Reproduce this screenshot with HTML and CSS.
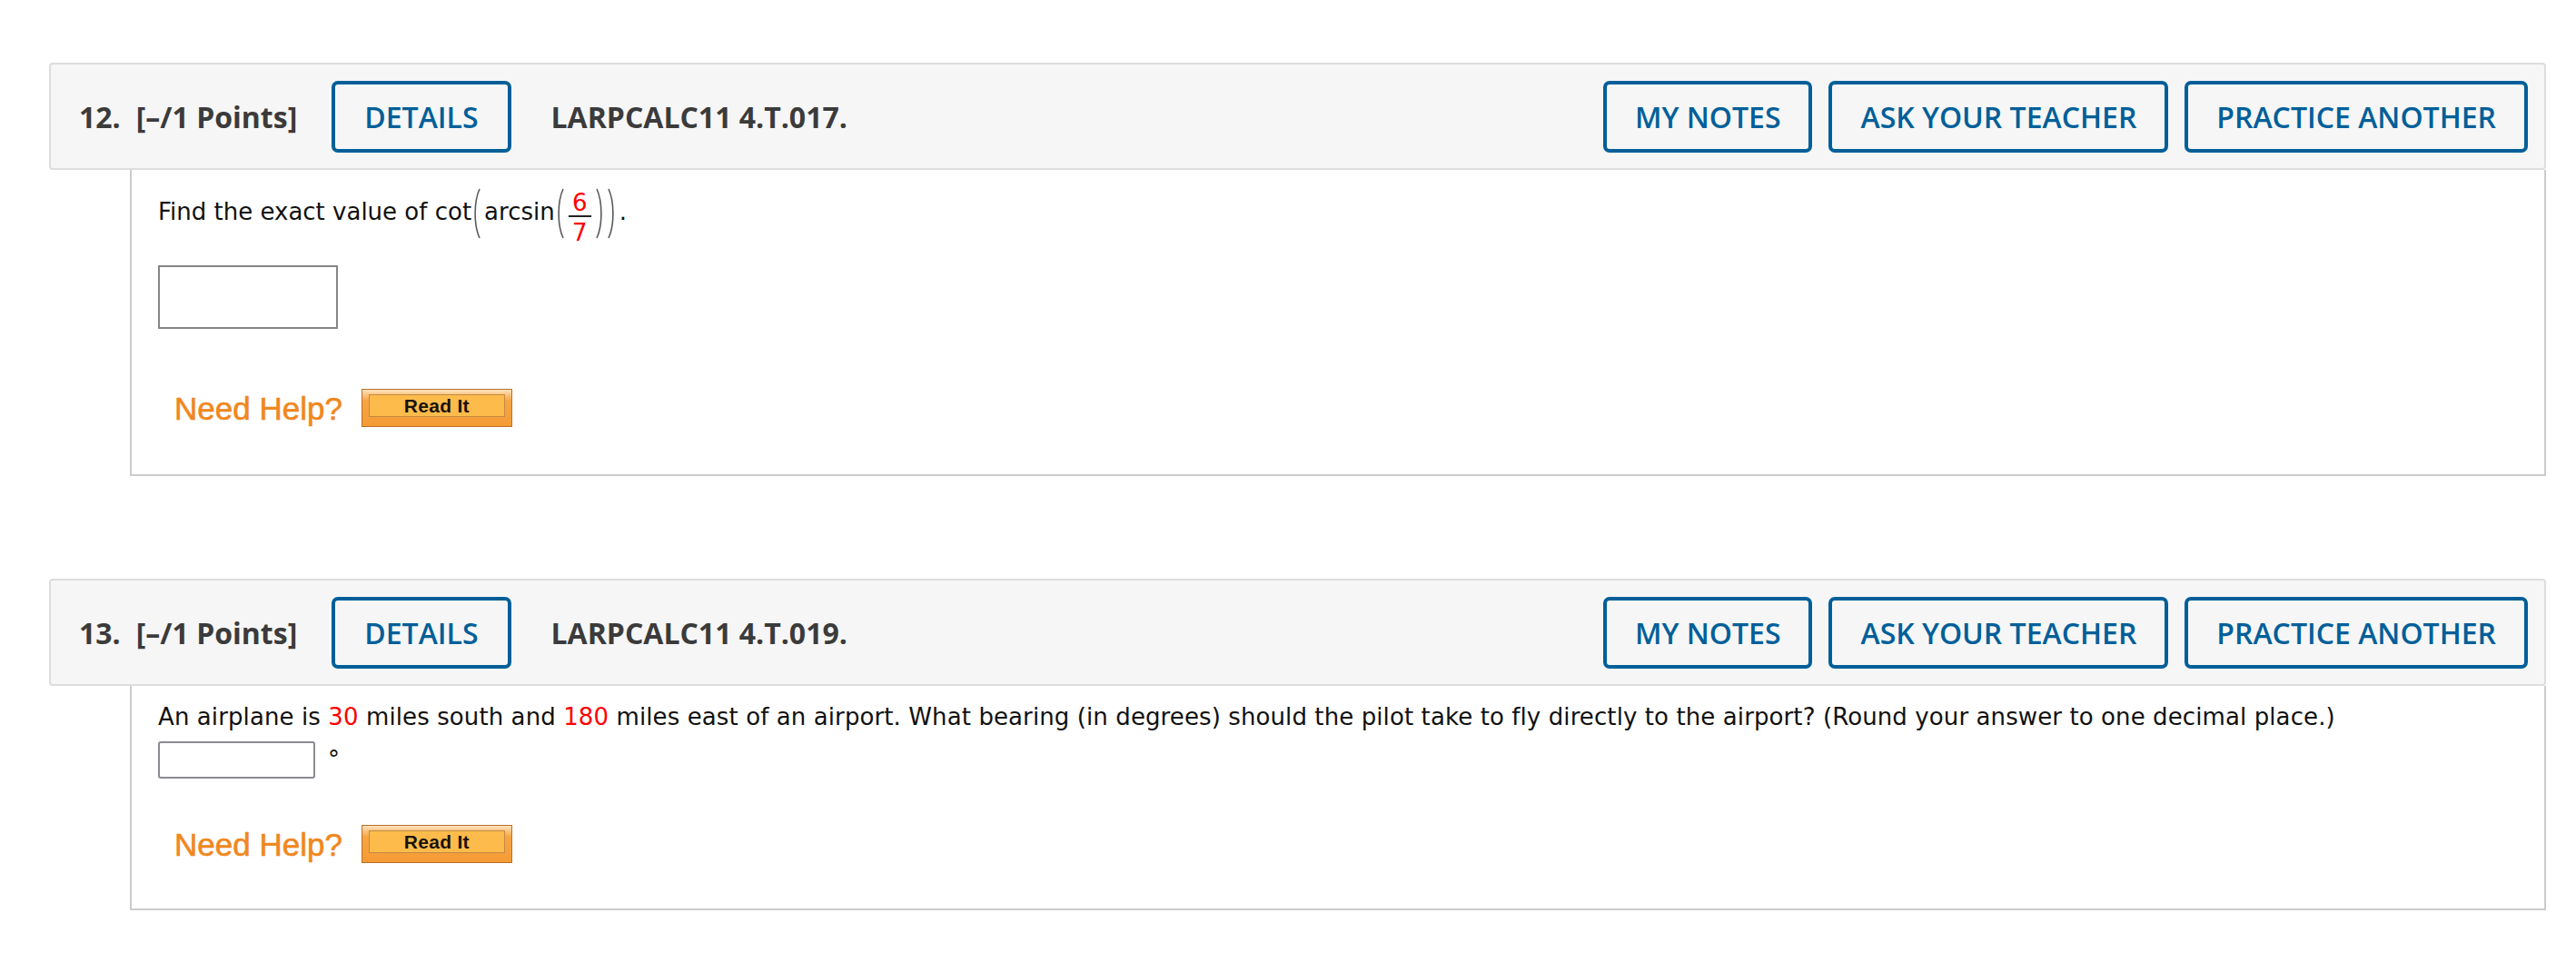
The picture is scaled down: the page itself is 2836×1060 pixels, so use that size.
FILE: index.html
```html
<!DOCTYPE html>
<html lang="en">
<head>
<meta charset="utf-8">
<title>Questions</title>
<link rel="stylesheet" href="styles.css">
</head>
<body>
<div class="page">

  <section class="question q12">
    <div class="q-header">
      <span class="q-num">12.</span>
      <span class="q-points">[–/1 Points]</span>
      <a class="q-btn details">DETAILS</a>
      <span class="q-code">LARPCALC11 4.T.017.</span>
      <div class="q-actions">
        <a class="q-btn">MY NOTES</a>
        <a class="q-btn">ASK YOUR TEACHER</a>
        <a class="q-btn">PRACTICE ANOTHER</a>
      </div>
    </div>
    <div class="q-body">
      <p class="prompt math-prompt">Find the exact value of cot<svg class="paren open" viewBox="0 0 10 56" width="10" height="56"><path d="M8 1 C1.5 15 1.5 41 8 55"/></svg>arcsin<svg class="paren open inner" viewBox="0 0 10 56" width="10" height="56"><path d="M8 1 C1.5 15 1.5 41 8 55"/></svg><span class="frac"><span class="num">6</span><span class="bar"></span><span class="den">7</span></span><svg class="paren close inner" viewBox="0 0 10 56" width="10" height="56"><path d="M2 1 C8.5 15 8.5 41 2 55"/></svg><svg class="paren close" viewBox="0 0 10 56" width="10" height="56"><path d="M2 1 C8.5 15 8.5 41 2 55"/></svg>.</p>
      <div class="answer big"></div>
      <div class="help-row">
        <span class="need-help">Need Help?</span>
        <span class="readit"><span class="readit-inner">Read It</span></span>
      </div>
    </div>
  </section>

  <section class="question q13">
    <div class="q-header">
      <span class="q-num">13.</span>
      <span class="q-points">[–/1 Points]</span>
      <a class="q-btn details">DETAILS</a>
      <span class="q-code">LARPCALC11 4.T.019.</span>
      <div class="q-actions">
        <a class="q-btn">MY NOTES</a>
        <a class="q-btn">ASK YOUR TEACHER</a>
        <a class="q-btn">PRACTICE ANOTHER</a>
      </div>
    </div>
    <div class="q-body">
      <p class="prompt wide">An airplane is <span class="red">30</span> miles south and <span class="red">180</span> miles east of an airport. What bearing (in degrees) should the pilot take to fly directly to the airport? (Round your answer to one decimal place.)</p>
      <div class="answer-row">
        <div class="answer small"></div>
        <span class="unit">°</span>
      </div>
      <div class="help-row second">
        <span class="need-help">Need Help?</span>
        <span class="readit"><span class="readit-inner">Read It</span></span>
      </div>
    </div>
  </section>

</div>
</body>
</html>
```
FILE: styles.css
```css
html, body {
  margin: 0;
  padding: 0;
  background: #ffffff;
}

.page {
  padding: 69px 33px 0 54px;
}

.question + .question {
  margin-top: 113px;
}

/* ---------- header bar ---------- */
.q-header {
  display: flex;
  align-items: center;
  height: 118px;
  box-sizing: border-box;
  background: #f6f6f6;
  border: 2px solid #dddddd;
  border-radius: 4px;
  padding: 0 18px 0 31px;
  font-family: "Open Sans", "Liberation Sans", sans-serif;
  color: #3b3b3b;
}

.q-num {
  font-size: 32px;
  font-weight: 700;
  margin-right: 17px;
}

.q-points {
  font-size: 32px;
  font-weight: 700;
  margin-right: 38px;
}

.q-code {
  font-size: 32px;
  font-weight: 700;
  margin-left: 44px;
}

.q-btn {
  display: flex;
  align-items: center;
  justify-content: center;
  height: 79px;
  box-sizing: border-box;
  padding: 0 32px;
  border: 4px solid #005f99;
  border-radius: 7px;
  color: #005f99;
  font-size: 32px;
  font-weight: 600;
  white-space: nowrap;
  text-decoration: none;
}

.q-actions {
  display: flex;
  gap: 18px;
  margin-left: auto;
}

.q-actions .q-btn {
  padding: 0 31px;
}

/* ---------- body box ---------- */
.q-body {
  margin-left: 89px;
  border: 2px solid #cccccc;
  border-top: none;
  background: #ffffff;
  padding: 0 0 0 29px;
}

.q12 .q-body {
  padding-top: 20px;
  padding-bottom: 52px;
}

.q13 .q-body {
  padding-top: 19px;
  padding-bottom: 50px;
}

.prompt {
  margin: 0;
  font-family: "DejaVu Sans", Verdana, sans-serif;
  font-size: 26px;
  color: #111111;
}

.prompt.wide {
  letter-spacing: 0.1px;
}

.red {
  color: #ff0000;
}

/* ---------- math ---------- */
.paren {
  display: inline-block;
  vertical-align: -21px;
  fill: none;
  stroke: #5a5a5a;
  stroke-width: 1.6;
}

.paren.open {
  margin: 0 3px 0 1px;
}

.paren.open.inner {
  margin: 0 4px 0 1px;
}

.paren.close.inner {
  margin: 0 2px 0 4px;
}

.paren.close {
  margin: 0 4px 0 1px;
}

.frac {
  display: inline-flex;
  flex-direction: column;
  align-items: center;
  vertical-align: 10px;
  line-height: 1;
  color: #ff0000;
}

.frac .num,
.frac .den {
  display: block;
  line-height: 26px;
}

.frac .bar {
  display: block;
  width: 25px;
  height: 2px;
  margin: 1px 0 4px;
  background: #222222;
}

/* ---------- answers ---------- */
.answer {
  box-sizing: border-box;
  border: 2px solid #858585;
  background: #ffffff;
}

.answer.big {
  width: 198px;
  height: 70px;
  margin-top: 23px;
}

.answer-row {
  display: flex;
  align-items: flex-start;
  margin-top: 12px;
}

.answer.small {
  width: 173px;
  height: 41px;
  border-color: #8a8a92;
  border-radius: 3px;
}

.unit {
  font-family: "DejaVu Sans", Verdana, sans-serif;
  font-size: 26px;
  line-height: 30px;
  color: #111111;
  margin: 5px 0 0 14px;
}

/* ---------- need help ---------- */
.help-row {
  display: flex;
  align-items: center;
  margin: 66px 0 0 18px;
}

.help-row.second {
  margin-top: 51px;
}

.need-help {
  font-family: "Liberation Sans", Arial, sans-serif;
  font-size: 35px;
  line-height: 1;
  color: #f0871e;
  -webkit-text-stroke: 0.6px #f0871e;
}

.readit {
  display: flex;
  align-items: flex-start;
  justify-content: center;
  box-sizing: border-box;
  width: 166px;
  height: 42px;
  margin-left: 21px;
  padding: 5px 7px 0;
  border: 1px solid #b86f28;
  background: linear-gradient(#fde3c0 0, #fbc98a 12%, #f7a544 30%, #f59b35 100%);
}

.readit-inner {
  display: flex;
  align-items: center;
  justify-content: center;
  box-sizing: border-box;
  width: 150px;
  height: 25px;
  border: 1px solid #c28a45;
  background: #fdbb4b;
  font-family: "Liberation Sans", Arial, sans-serif;
  font-size: 21px;
  font-weight: 700;
  color: #1a1208;
  letter-spacing: 0.3px;
}
```
